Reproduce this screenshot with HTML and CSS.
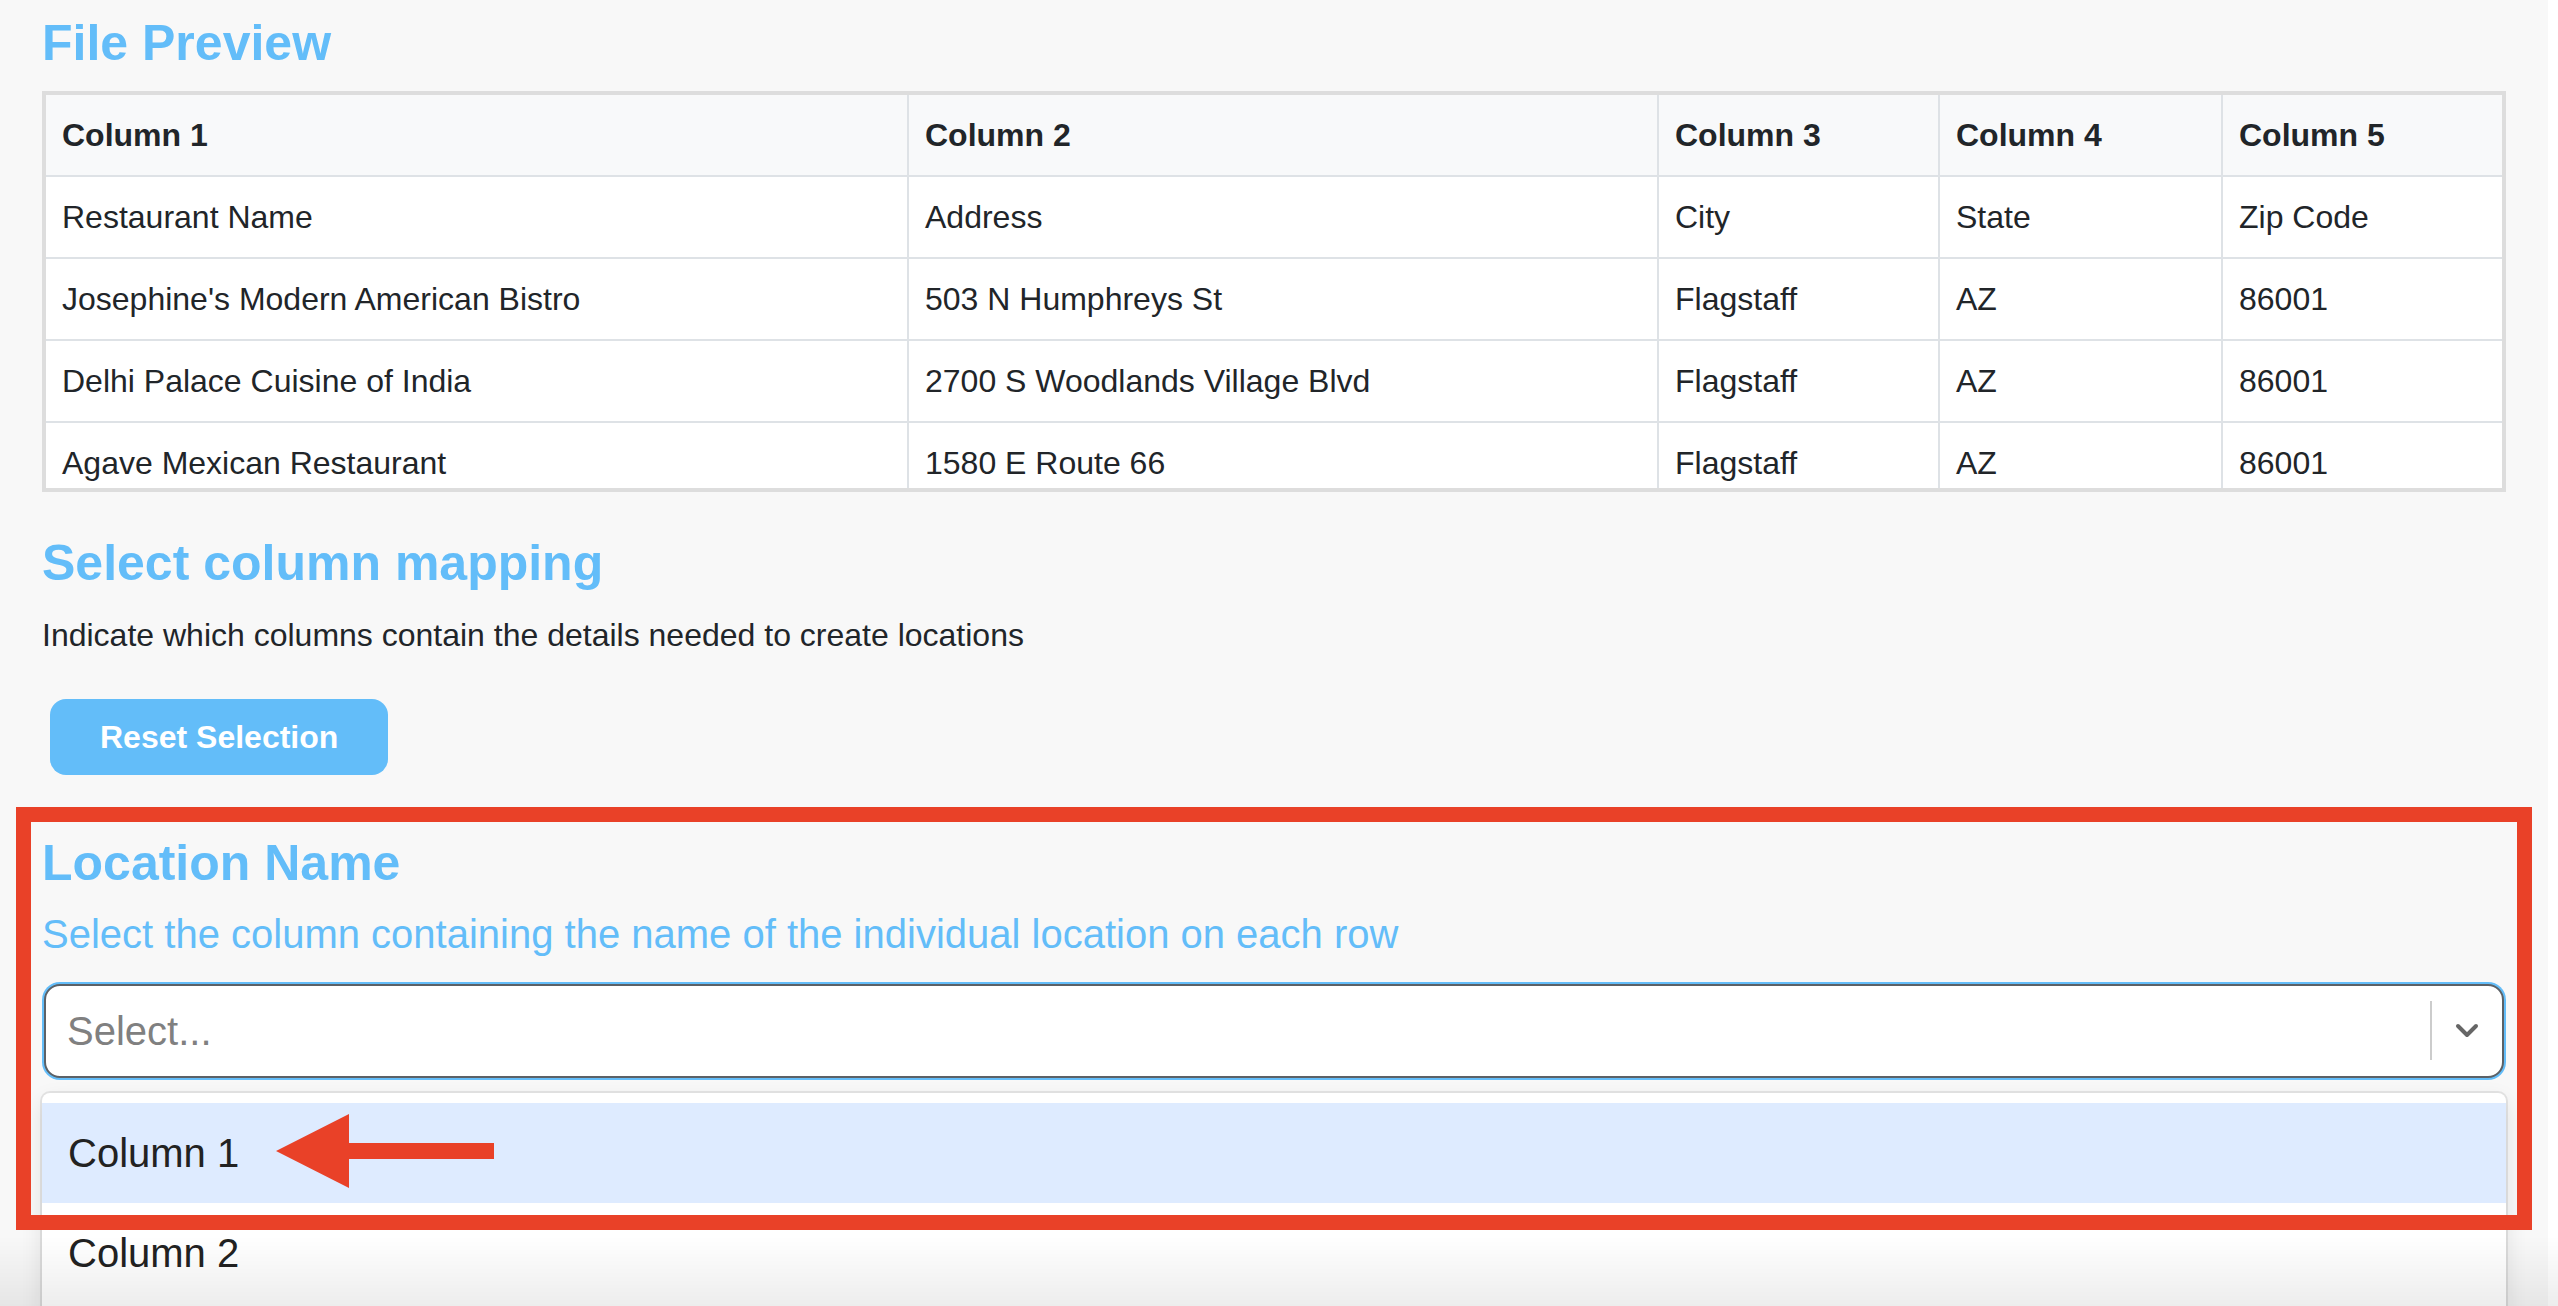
FILE: index.html
```html
<!DOCTYPE html>
<html lang="en">
<head>
  <meta charset="UTF-8">
  <meta name="viewport" content="width=device-width, initial-scale=1.0">
  <title>Import Locations - Column Mapping</title>
  <link rel="stylesheet" href="styles.css">
</head>
<body>
  <div class="page">
    <h2 class="section-title">File Preview</h2>
    <div class="preview-wrap">
      <table class="preview-table">
        <colgroup>
          <col class="col-1">
          <col class="col-2">
          <col class="col-3">
          <col class="col-4">
          <col class="col-5">
        </colgroup>
        <thead>
          <tr>
            <th>Column 1</th>
            <th>Column 2</th>
            <th>Column 3</th>
            <th>Column 4</th>
            <th>Column 5</th>
          </tr>
        </thead>
        <tbody>
          <tr>
            <td>Restaurant Name</td>
            <td>Address</td>
            <td>City</td>
            <td>State</td>
            <td>Zip Code</td>
          </tr>
          <tr>
            <td>Josephine's Modern American Bistro</td>
            <td>503 N Humphreys St</td>
            <td>Flagstaff</td>
            <td>AZ</td>
            <td>86001</td>
          </tr>
          <tr>
            <td>Delhi Palace Cuisine of India</td>
            <td>2700 S Woodlands Village Blvd</td>
            <td>Flagstaff</td>
            <td>AZ</td>
            <td>86001</td>
          </tr>
          <tr>
            <td>Agave Mexican Restaurant</td>
            <td>1580 E Route 66</td>
            <td>Flagstaff</td>
            <td>AZ</td>
            <td>86001</td>
          </tr>
        </tbody>
      </table>
    </div>

    <h2 class="section-title mapping-title">Select column mapping</h2>
    <p class="mapping-desc">Indicate which columns contain the details needed to create locations</p>
    <button type="button" class="reset-btn">Reset Selection</button>

    <div class="field">
      <h2 class="section-title">Location Name</h2>
      <p class="field-hint">Select the column containing the name of the individual location on each row</p>
      <div class="select-control">
        <div class="select-value">Select...</div>
        <span class="select-separator"></span>
        <div class="select-indicator">
          <svg width="26" height="18" viewBox="0 0 26 18">
            <polyline points="4,4 13,13 22,4" fill="none" stroke="#666" stroke-width="4" stroke-linecap="round" stroke-linejoin="round"/>
          </svg>
        </div>
      </div>
      <div class="select-menu">
        <div class="select-option is-focused">Column 1</div>
        <div class="select-option">Column 2</div>
      </div>
    </div>

    <!-- annotation overlay -->
    <div class="callout-box"></div>
    <svg class="callout-arrow" width="218" height="74" viewBox="0 0 218 74">
      <polygon points="0,37 73,0 73,29 218,29 218,45 73,45 73,74" fill="#e94128"/>
    </svg>
  </div>
  <div class="bottom-fade"></div>
</body>
</html>
```

FILE: styles.css
```css
html {
  background-color: #fff;
}
body {
  margin: 0;
  font-family: "Liberation Sans", Arial, sans-serif;
  color: #212529;
}
.page {
  position: relative;
  background-color: #f8f8f8;
  margin-right: 10px;
  padding: 13px 42px 0;
  height: 100vh;
  box-sizing: border-box;
  overflow: hidden;
}
.section-title {
  margin: 0;
  font-size: 50px;
  line-height: 60px;
  font-weight: bold;
  color: #63bdf9;
}
.preview-wrap {
  margin-top: 18px;
  height: 401px;
  border: 4px solid #dddddd;
  box-sizing: border-box;
  overflow: hidden;
}
.preview-table {
  width: 100%;
  table-layout: fixed;
  border-collapse: separate;
  border-spacing: 0;
  font-size: 32px;
  line-height: 48px;
}
.col-1 { width: 863px; }
.col-2 { width: 750px; }
.col-3 { width: 281px; }
.col-4 { width: 283px; }
.col-5 { width: 279px; }
.preview-table th,
.preview-table td {
  padding: 16px;
  text-align: left;
  white-space: nowrap;
  border-right: 2px solid #dee2e6;
  border-bottom: 2px solid #dee2e6;
}
.preview-table th:last-child,
.preview-table td:last-child {
  border-right: none;
}
.preview-table th {
  background-color: #f8f9fa;
  font-weight: bold;
}
.preview-table td {
  background-color: #fff;
}
.mapping-title {
  margin-top: 41px;
}
.mapping-desc {
  margin: 18px 0 0;
  font-size: 32px;
  line-height: 48px;
}
.reset-btn {
  display: block;
  margin: 40px 0 0 8px;
  padding: 14px 50px;
  border: none;
  border-radius: 16px;
  background-color: #63bdf9;
  color: #fff;
  font-family: inherit;
  font-size: 32px;
  line-height: 48px;
  font-weight: bold;
  cursor: pointer;
}
.field {
  margin-top: 58px;
}
.field-hint {
  margin: 11px 0 0;
  font-size: 40px;
  line-height: 60px;
  color: #63bdf9;
}
.select-control {
  margin: 20px 2px 0;
  height: 94px;
  box-sizing: border-box;
  display: flex;
  align-items: center;
  background-color: #fff;
  border: 2px solid #5c6166;
  border-radius: 16px;
  box-shadow: 0 0 0 2px #63bdf9;
}
.select-value {
  flex: 1;
  padding: 0 21px;
  font-size: 40px;
  color: #808080;
}
.select-separator {
  align-self: stretch;
  width: 2px;
  margin: 15px 0 16px;
  background-color: #cccccc;
}
.select-indicator {
  width: 70px;
  display: flex;
  justify-content: center;
  align-items: center;
}
.select-menu {
  margin-top: 15px;
  padding: 10px 0 60px;
  background-color: #fff;
  border-radius: 8px;
  box-shadow: 0 0 0 2px rgba(0, 0, 0, 0.08), 0 8px 22px rgba(0, 0, 0, 0.1);
}
.select-option {
  padding: 20px 26px;
  font-size: 40px;
  line-height: 60px;
  color: #222;
}
.select-option.is-focused {
  background-color: #deebff;
}
.callout-box {
  position: absolute;
  left: 16px;
  top: 807px;
  width: 2516px;
  height: 423px;
  box-sizing: border-box;
  border: 15px solid #e94128;
  pointer-events: none;
}
.callout-arrow {
  position: absolute;
  left: 276px;
  top: 1114px;
}
.bottom-fade {
  position: fixed;
  left: 0;
  right: 0;
  bottom: 0;
  height: 70px;
  background: linear-gradient(to bottom, rgba(0, 0, 0, 0), rgba(0, 0, 0, 0.07));
  pointer-events: none;
}
```
